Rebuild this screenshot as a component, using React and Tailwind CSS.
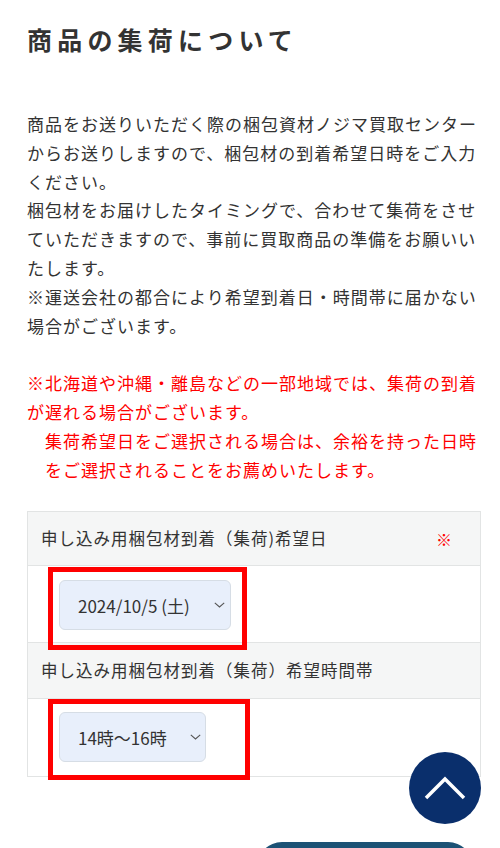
import React from "react";

function Chevron({ className }) {
  return (
    <svg className={className} width="11" height="6" viewBox="0 0 11 6" fill="none">
      <path d="M0.8 0.8 L5.5 5 L10.2 0.8" stroke="#555" strokeWidth="1.1" />
    </svg>
  );
}

export default function App() {
  return (
    <div
      className="relative w-[500px] h-[848px] overflow-hidden bg-white text-[#333]"
      style={{ fontFamily: '"Noto Sans CJK JP", "Noto Sans", sans-serif' }}
    >
      <div className="px-[27px]">
        <h2 className="pt-[21px] text-[25px] leading-[36px] font-bold tracking-[5.2px] text-[#333]">
          商品の集荷について
        </h2>

        <p className="mt-[53px] text-[17px] leading-[28.8px] tracking-[1px] whitespace-nowrap">
          商品をお送りいただく際の梱包資材ノジマ買取センター
          <br />
          からお送りしますので、梱包材の到着希望日時をご入力
          <br />
          ください。
          <br />
          梱包材をお届けしたタイミングで、合わせて集荷をさせ
          <br />
          ていただきますので、事前に買取商品の準備をお願いい
          <br />
          たします。
          <br />
          ※運送会社の都合により希望到着日・時間帯に届かない
          <br />
          場合がございます。
        </p>

        <p className="mt-[28.8px] text-[17px] leading-[28.8px] tracking-[1px] whitespace-pre text-[#ff0000]">
          ※北海道や沖縄・離島などの一部地域では、集荷の到着
          <br />
          が遅れる場合がございます。
          <br />
          {"\u3000集荷希望日をご選択される場合は、余裕を持った日時"}
          <br />
          {"\u3000をご選択されることをお薦めいたします。"}
        </p>

        <div className="mt-[27px] w-[454px] border border-[#e2e4e4]">
          <div className="h-[54px] bg-[#f5f6f6] border-b border-[#e2e4e4] flex items-center justify-between pl-[13px] pr-[27px] text-[16.5px] tracking-[1px]">
            <span>申し込み用梱包材到着（集荷)希望日</span>
            <span className="text-[#ff0000] text-[16px]">※</span>
          </div>
          <div className="h-[77px] border-b border-[#e2e4e4] pl-[31px] pt-[14px]">
            <div className="relative w-[172px] h-[50px] rounded-[6px] bg-[#e8effb] border border-[#d6dde5] flex items-center pl-[18px] pr-[5px] text-[17px]">
              <span>2024/10/5 (土)</span>
              <Chevron className="ml-auto" />
              <div className="absolute left-[-12px] right-[-17px] top-[-14px] bottom-[-21px] border-[5px] border-[#ff0000]" />
            </div>
          </div>
          <div className="h-[56px] bg-[#f5f6f6] border-b border-[#e2e4e4] flex items-center pl-[13px] text-[16.5px] tracking-[1px]">
            <span>申し込み用梱包材到着（集荷）希望時間帯</span>
          </div>
          <div className="h-[77px] pl-[31px] pt-[13px]">
            <div className="relative w-[147px] h-[50px] rounded-[6px] bg-[#e8effb] border border-[#d6dde5] flex items-center pl-[18px] pr-[4px] text-[17px]">
              <span>14時〜16時</span>
              <Chevron className="ml-auto" />
              <div className="absolute left-[-12px] right-[-45px] top-[-14px] bottom-[-19px] border-[5px] border-[#ff0000]" />
            </div>
          </div>
        </div>

        <div className="mt-[65px] ml-[230px] w-[216px] h-[50px] rounded-full bg-[#1c5275]" />
      </div>

      <button className="absolute left-[409px] top-[752px] w-[72px] h-[72px] rounded-full bg-[#0a2f6c] flex items-center justify-center">
        <svg width="44" height="26" viewBox="0 0 44 26" fill="none">
          <path d="M3 23 L22 4 L41 23" stroke="#fff" strokeWidth="3.5" />
        </svg>
      </button>
    </div>
  );
}
